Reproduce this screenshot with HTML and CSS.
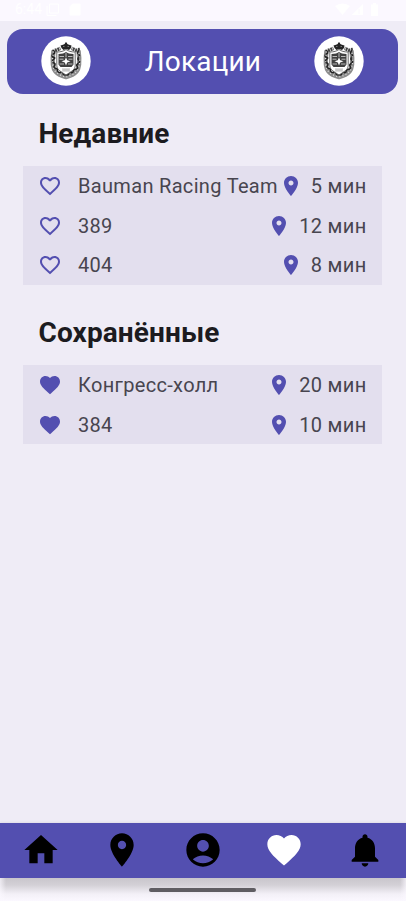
FILE: index.html
```html
<!DOCTYPE html>
<html lang="ru">
<head>
<meta charset="utf-8">
<title>Локации</title>
<link rel="stylesheet" href="styles.css">
</head>
<body>
<svg class="defs" aria-hidden="true">
  <symbol id="heart-outline" viewBox="0 0 24 24"><path d="M16.5 3c-1.74 0-3.41.81-4.5 2.09C10.91 3.81 9.24 3 7.5 3 4.42 3 2 5.42 2 8.5c0 3.78 3.4 6.86 8.55 11.54L12 21.35l1.45-1.32C18.6 15.36 22 12.28 22 8.5 22 5.42 19.58 3 16.5 3zm-4.4 15.55l-.1.1-.1-.1C7.14 14.24 4 11.39 4 8.5 4 6.5 5.5 5 7.5 5c1.54 0 3.04.99 3.57 2.36h1.87C13.46 5.99 14.96 5 16.5 5c2 0 3.5 1.5 3.5 3.5 0 2.89-3.14 5.74-7.9 10.05z"/></symbol>
  <symbol id="heart" viewBox="0 0 24 24"><path d="M12 21.35l-1.45-1.32C5.4 15.36 2 12.28 2 8.5 2 5.42 4.42 3 7.5 3c1.74 0 3.41.81 4.5 2.09C13.09 3.81 14.76 3 16.5 3 19.58 3 22 5.42 22 8.5c0 3.78-3.4 6.86-8.55 11.54L12 21.35z"/></symbol>
  <symbol id="pin" viewBox="0 0 24 24"><path d="M12 2C8.13 2 5 5.13 5 9c0 5.25 7 13 7 13s7-7.75 7-13c0-3.87-3.13-7-7-7zm0 9.5c-1.38 0-2.5-1.12-2.5-2.5s1.12-2.5 2.5-2.5 2.5 1.12 2.5 2.5-1.12 2.5-2.5 2.5z"/></symbol>
  <symbol id="home" viewBox="0 0 24 24"><path d="M10 20v-6h4v6h5v-8h3L12 3 2 12h3v8z"/></symbol>
  <symbol id="account" viewBox="0 0 24 24"><path d="M12 2C6.48 2 2 6.48 2 12s4.480 10 10 10 10-4.480 10-10S17.520 2 12 2zm0 4c1.930 0 3.500 1.570 3.500 3.500S13.930 13 12 13 8.500 11.430 8.500 9.500 10.070 6 12 6zM12 20c-2.030 0-4.430-.820-6.140-2.380C7.550 16.100 9.680 15.300 12 15.300s4.450.800 6.140 2.320C16.430 19.180 14.030 20 12 20z"/></symbol>
  <symbol id="bell" viewBox="0 0 24 24"><path d="M12 22c1.1 0 2-.9 2-2h-4c0 1.1.89 2 2 2zm6-6v-5c0-3.07-1.64-5.64-4.500-6.320V4c0-.83-.67-1.500-1.500-1.500s-1.500.67-1.500 1.500v.68C7.630 5.360 6 7.920 6 11v5l-2 2v1h16v-1l-2-2z"/></symbol>
  <symbol id="emblem" viewBox="0 0 50 50">
    <circle cx="25" cy="25" r="24.7" fill="#fff"/>
    <g fill="none">
      <path d="M12.500 14.500C11.500 22 10.500 31 14.500 35.500c2.500 2.800 6.500 4.500 10.500 5.500 4-1 8-2.700 10.500-5.500 4-4.500 3-13.500 2-21" stroke-width="4.500" stroke="#8c8c8c"/>
      <path d="M11.500 14c2 1 3 3 1 4s-2 3 .5 3.500-2 2-1.500 4 3 1 2.500 3-2 2-.5 3.500 3-.5 3 1.500 0 3 2 3 2-2 3-.5 0 3 2 3 1-1.500 1.500-1.500 0 1.500 1.500 1.500 1-2 2-3 2 1.500 3 .5 0-2 2-3 2 1 3-1.500-2-2-.5-3.500 2.500-1 2.500-3-2-1.500-1.500-3 2.500-2 1-4-2-1-1-3 2-2 .5-3.500" stroke-width="1.600" stroke="#222"/>
      <path d="M12.500 15.500C11 22 10.500 31 14.500 35.500c2.500 2.800 6.500 4.500 10.500 5.500 4-1 8-2.700 10.500-5.500 4-4.500 3.500-13.500 2-20" stroke-width="1.300" stroke="#ddd" stroke-dasharray="1 2.300"/>
      <path d="M14 14.500l5.500-2M36 14.500l-5.500-2" stroke-width="3.500" stroke="#444" stroke-dasharray="2 .6"/>
    </g>
    <path d="M15.800 16c4 0 7-.800 9.200-2.500 2.200 1.700 5.200 2.500 9.200 2.500v13.500c0 4.500-5 6.500-9.200 9.500-4.200-3-9.200-5-9.200-9.500z" fill="#fff" stroke="#444" stroke-width=".8"/>
    <path d="M17.500 18c3.500 0 6-.700 7.500-2 1.500 1.300 4 2 7.500 2v10.500l-2 2.500h-11l-2-2.500z" fill="#404040"/>
    <path d="M18.500 20.500h4.500m4 0h4.500M18.500 23.200h4m5 0h4M18.500 28h4.500m4 0h4.500M25 17v4" stroke="#c8c8c8" stroke-width=".9"/>
    <path d="M25 21.200l1.200 3 3.300 1.100-3.300 1.100-1.200 3.100-1.200-3.100-3.300-1.100 3.300-1.100z" fill="#fff"/>
    <path d="M22 32v4m2-4v4m2-4v4m2-4v4M21.500 34h7" stroke="#aaa" stroke-width=".8"/>
    <path d="M19.500 9.500l2.500-.800 1.700-.700.500-1.500h1.600l.500 1.500 1.700.700 2.500.800-.500 2.500-2 2L25 13l-2.500 1-2-2z" fill="#242424"/>
    <path d="M22 10.500h1.500m3 0H28" stroke="#999" stroke-width=".7" fill="none"/>
  </symbol>
</svg>

<div class="status">
  <span class="status-time">6:44</span>
  <svg class="status-left" viewBox="0 0 36 13" fill="none" stroke="#fff" stroke-width="1"><path d="M3.500 1h9v9h-9zM1 3v9.500h9.500"/><path fill="#fff" d="M26.500 1H34v11H24V3.500z"/></svg>
  <svg class="status-right" viewBox="0 0 44 13" fill="#fff"><path d="M0 3q7.500-5 15 0L7.500 12zM16.500 12L28 1v11zM36 1.500h2V0h3v1.500h2V13h-7z"/><path d="M24 6v5" stroke="#fbf8ff"/></svg>
</div>

<header class="header">
  <svg class="logo"><use href="#emblem"/></svg>
  <h1 class="title">Локации</h1>
  <svg class="logo"><use href="#emblem"/></svg>
</header>

<main class="content">
  <section class="section">
    <h2 class="heading">Недавние</h2>
    <ul class="list">
      <li class="row"><svg class="icon"><use href="#heart-outline"/></svg><span class="name">Bauman Racing Team</span><svg class="icon"><use href="#pin"/></svg><span class="time">5 мин</span></li>
      <li class="row"><svg class="icon"><use href="#heart-outline"/></svg><span class="name">389</span><svg class="icon"><use href="#pin"/></svg><span class="time">12 мин</span></li>
      <li class="row"><svg class="icon"><use href="#heart-outline"/></svg><span class="name">404</span><svg class="icon"><use href="#pin"/></svg><span class="time">8 мин</span></li>
    </ul>
  </section>
  <section class="section">
    <h2 class="heading">Сохранённые</h2>
    <ul class="list">
      <li class="row"><svg class="icon"><use href="#heart"/></svg><span class="name">Конгресс-холл</span><svg class="icon"><use href="#pin"/></svg><span class="time">20 мин</span></li>
      <li class="row"><svg class="icon"><use href="#heart"/></svg><span class="name">384</span><svg class="icon"><use href="#pin"/></svg><span class="time">10 мин</span></li>
    </ul>
  </section>
</main>

<nav class="nav">
  <svg class="nav-icon"><use href="#home"/></svg>
  <svg class="nav-icon"><use href="#pin"/></svg>
  <svg class="nav-icon"><use href="#account"/></svg>
  <svg class="nav-icon active"><use href="#heart"/></svg>
  <svg class="nav-icon"><use href="#bell"/></svg>
</nav>
<div class="gesture"><div class="handle"></div></div>
</body>
</html>
```
FILE: styles.css
```css
* { box-sizing: border-box; }

body {
  margin: 0;
  height: 901px;
  display: flex;
  flex-direction: column;
  overflow: hidden;
  background: #efecf6;
  color: #48454f;
  font-family: Roboto, sans-serif;
}

.defs { display: none; }

.status {
  flex: none;
  height: 21px;
  padding: 0 27px 3px 15px;
  display: flex;
  align-items: center;
  background: #fbf8ff;
  color: #fff;
}
.status-time { font-size: 14px; line-height: 18px; width: 31px; }
.status-left { width: 36px; height: 13px; }
.status-right { width: 44px; height: 13px; margin-left: auto; }

.header {
  flex: none;
  height: 65px;
  margin: 8px 8px 0 7px;
  padding: 0 34px 1px;
  display: flex;
  align-items: center;
  justify-content: space-between;
  border-radius: 16px;
  background: #534fb0;
}
.logo { width: 50px; height: 50px; }
.title {
  margin: 0;
  padding: 1px 0 0 1px;
  color: #fff;
  font-size: 28px;
  font-weight: 400;
  line-height: 36px;
  letter-spacing: 0.2px;
}

.content { flex: 1; padding: 20px 24px 0 23px; }
.section { margin-bottom: 28px; }
.heading {
  margin: 0;
  padding: 0 0 12px 15.5px;
  color: #1c1b20;
  font-size: 28px;
  font-weight: 700;
  line-height: 40px;
  letter-spacing: 0.1px;
}
.list { margin: 0; padding: 0; list-style: none; background: #e3dfee; }
.row {
  height: 39.7px;
  padding: 0 15.5px 0 15px;
  display: flex;
  align-items: center;
  font-size: 20px;
  line-height: 24px;
  letter-spacing: 0.32px;
  white-space: nowrap;
}
.icon { flex: none; width: 24px; height: 24px; fill: #534fb0; }
.name { flex: 1; min-width: 0; margin-left: 16px; }
.time { margin-left: 8px; }

.nav {
  flex: none;
  height: 55px;
  padding: 0 1px 0 0;
  display: flex;
  align-items: center;
  justify-content: space-around;
  background: #534fb0;
  box-shadow: 0 -1px 2px rgba(0, 0, 0, 0.06);
}
.nav-icon { width: 40px; height: 40px; margin-bottom: 1px; fill: #000; }
.nav-icon.active { fill: #fff; }

.gesture {
  flex: none;
  height: 23px;
  padding: 10px 1px 0 0;
  background:
    linear-gradient(90deg, rgba(251, 248, 255, 0.7), transparent 6px, transparent 400px, rgba(251, 248, 255, 0.7)),
    linear-gradient(#c9c6cc, #d3d0d6 30%, #f3f0f7 70%, #fbf8ff);
}
.handle {
  width: 107px;
  height: 4px;
  margin: 0 auto;
  border-radius: 2px;
  background: #5f5d62;
}
```
